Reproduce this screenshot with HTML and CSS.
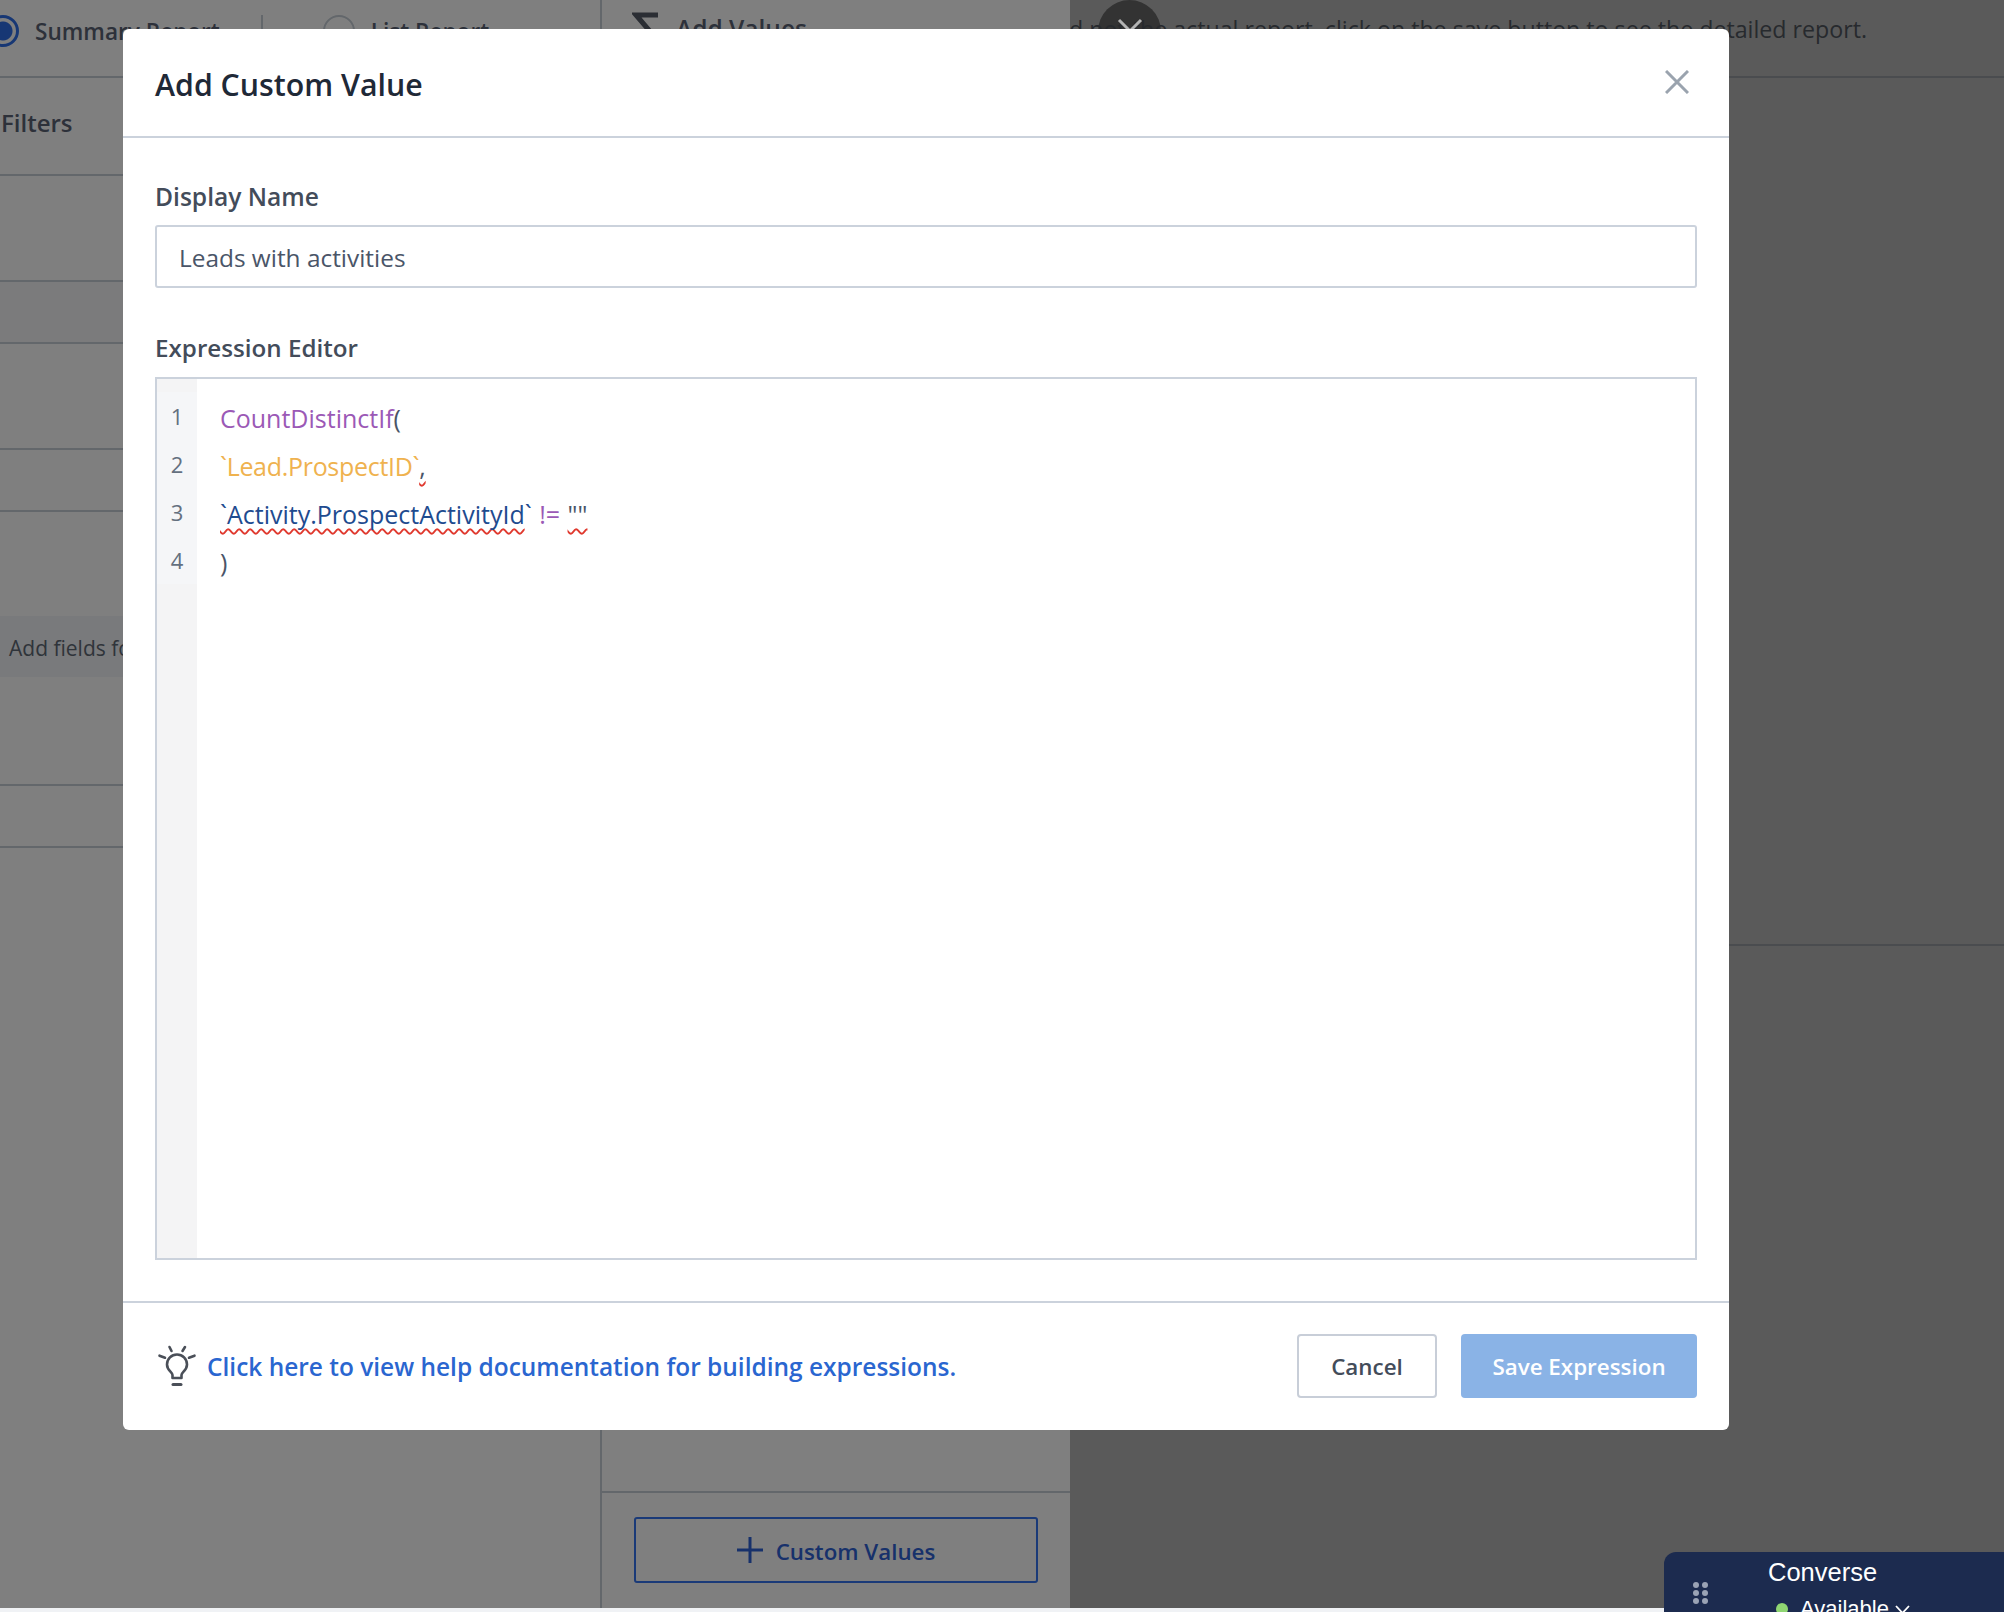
FILE: index.html
```html
<!DOCTYPE html>
<html lang="en">
<head>
<meta charset="utf-8">
<title>Add Custom Value</title>
<link rel="stylesheet" href="styles.css">
</head>
<body>
<div class="app">
  <section class="left">
    <div class="row row-head">
      <span class="radio radio-on"></span>
      <span class="type-label">Summary Report</span>
      <span class="type-sep"></span>
      <span class="radio"></span>
      <span class="type-label">List Report</span>
    </div>
    <div class="row row-filters"><span class="filters">Filters</span></div>
    <div class="row row-tall"></div>
    <div class="row row-short row-shaded"></div>
    <div class="row row-tall"></div>
    <div class="row row-short"></div>
    <div class="row row-drop"><div class="drop-band">Add fields for filtering</div></div>
    <div class="row row-short"></div>
  </section>
  <section class="mid">
    <div class="mid-head">
      <svg class="sigma" width="28" height="34" viewBox="0 0 28 34"><path d="M26 3H4L16 17L4 31H26" fill="none" stroke="#565c68" stroke-width="5"/></svg>
      <span class="mid-title">Add Values</span>
    </div>
    <div class="mid-foot">
      <div class="custom-btn">
        <svg width="26" height="26" viewBox="0 0 26 26"><path d="M13 0V26M0 13H26" fill="none" stroke="#2f62d6" stroke-width="3"/></svg>
        <span>Custom Values</span>
      </div>
    </div>
  </section>
  <section class="right">
    <div class="right-head">
      <span class="circle"></span>
      <span class="note">and not the actual report, click on the save button to see the detailed report.</span>
    </div>
    <div class="right-pane"></div>
  </section>
</div>

<div class="overlay">
  <svg class="circle-x" width="26" height="26" viewBox="0 0 26 26"><path d="M2 2L24 24M24 2L2 24" fill="none" stroke="#b4b4b4" stroke-width="3"/></svg>
  <div class="modal">
    <header class="modal-head">
      <h1 class="modal-title">Add Custom Value</h1>
      <svg class="modal-close" width="24" height="24" viewBox="0 0 24 24"><path d="M1 1L23 23M23 1L1 23" fill="none" stroke="#9aa3ae" stroke-width="3"/></svg>
    </header>
    <div class="modal-body">
      <label class="field-label">Display Name</label>
      <div class="input">Leads with activities</div>
      <label class="field-label field-label-second">Expression Editor</label>
      <div class="editor">
        <div class="gutter">
          <div class="ln">1</div>
          <div class="ln">2</div>
          <div class="ln">3</div>
          <div class="ln">4</div>
        </div>
        <div class="code">
          <div class="cl"><span class="fn">CountDistinctIf</span><span class="pn">(</span></div>
          <div class="cl"><span class="str">`Lead.ProspectID`</span><span class="pn sq">,</span></div>
          <div class="cl cl-expr"><span class="fld"><span class="sq">`Activity.ProspectActivityId</span>`</span> <span class="fn">!=</span> <span class="pn sq">""</span></div>
          <div class="cl"><span class="pn">)</span></div>
        </div>
      </div>
    </div>
    <footer class="modal-foot">
      <svg class="bulb" width="40" height="42" viewBox="0 0 40 42"><g fill="none" stroke="#4a4f58" stroke-width="2.6" stroke-linecap="round" stroke-linejoin="round"><path d="M2.5 10.7L8 12.7M12.5 2L14.5 6M28 2L25.5 6M37.5 10.7L32 12.7"/><path d="M15.5 33V30C15.5 27 10 25.5 10 19.5A10 10 0 0 1 30 19.5C30 25.5 24.5 27 24.5 30V33Z"/><path d="M16 39.5H24" stroke-width="3"/></g></svg>
      <a class="help-link">Click here to view help documentation for building expressions.</a>
      <span class="btn btn-cancel">Cancel</span>
      <span class="btn btn-save">Save Expression</span>
    </footer>
  </div>
</div>

<aside class="converse">
  <div class="grip"><i></i><i></i><i></i><i></i><i></i><i></i></div>
  <div class="conv-text">
    <div class="conv-title">Converse</div>
    <div class="conv-status">
      <span class="dot"></span>
      <span>Available</span>
      <svg width="15" height="9" viewBox="0 0 15 9"><path d="M1 1L7.5 8L14 1" fill="none" stroke="#fff" stroke-width="1.8"/></svg>
    </div>
  </div>
</aside>
</body>
</html>
```
FILE: styles.css
```css
* { box-sizing: border-box; }
html, body { margin: 0; padding: 0; }
body {
  width: 2004px;
  height: 1612px;
  overflow: hidden;
  position: relative;
  background: #f0f2f5;
  font-family: "Open Sans", "Noto Sans", sans-serif;
  color: #4a5568;
}
.app { display: flex; height: 1608px; background: #fff; }

/* left column */
.left { width: 600px; flex: none; overflow: hidden; }
.row { border-bottom: 2px solid #c6ced6; }
.row-head { height: 78px; display: flex; align-items: center; padding-bottom: 14px; }
.radio {
  width: 32px; height: 32px; flex: none;
  border: 2px solid #c6ced6; border-radius: 50%;
  margin-left: 0;
}
.radio-on {
  margin-left: -13px;
  border: 3px solid #2f6fe8;
  background: radial-gradient(circle, #2f6fe8 0 9px, transparent 10px);
}
.type-label { font-size: 22.6px; font-weight: 600; color: #5a6375; white-space: nowrap; margin-left: 16px; }
.type-sep { width: 2px; height: 32px; background: #c6ced6; margin: 0 60px 0 41px; }
.row-filters { height: 98px; display: flex; align-items: center; padding: 0 0 7px 1px; }
.filters { font-size: 24px; font-weight: 600; color: #5a6375; }
.row-tall { height: 106px; }
.row-short { height: 62px; }
.row-shaded { background: #f6f7f9; }
.row-drop { height: 274px; padding-top: 104px; }
.drop-band {
  height: 61px; line-height: 65px; padding-left: 9px;
  background: #f3f5f8; font-size: 21px; color: #5f6875; white-space: nowrap;
}

/* middle column */
.mid {
  width: 470px; flex: none;
  display: flex; flex-direction: column;
  border-left: 2px solid #c6ced6;
}
.mid-head { height: 58px; display: flex; align-items: flex-start; padding: 12px 0 0 30px; }
.sigma { flex: none; }
.mid-title { font-size: 24.5px; font-weight: 600; color: #5a6375; margin-left: 16px; line-height: 34px; }
.mid-foot { margin-top: auto; border-top: 2px solid #c6ced6; padding: 24px 32px 25px; }
.custom-btn {
  height: 66px; width: 404px;
  display: flex; align-items: center; justify-content: center; gap: 13px;
  border: 2px solid #3474f0; border-radius: 3px;
  color: #2f62d6; font-size: 22.3px; font-weight: 600;
}
.custom-btn span { padding-top: 2px; }

/* right column */
.right { flex: 1; min-width: 0; background: #b4b4b4; overflow: hidden; position: relative; }
.right-head {
  height: 78px;
  display: flex; justify-content: flex-end;
  padding: 11px 137px 0 0;
  border-bottom: 2px solid #94999e;
  white-space: nowrap;
}
.note { font-size: 23.2px; line-height: 36px; color: #4f545c; position: relative; }
.circle {
  position: absolute; left: 28px; top: 0;
  width: 63px; height: 63px; border-radius: 50%;
  background: #666;
}
.right-pane { height: 868px; border-bottom: 2px solid #94999e; }

/* overlay and modal */
.overlay {
  position: absolute; left: 0; top: 0; right: 0; height: 1608px;
  background: rgba(0, 0, 0, .5);
}
.circle-x { position: absolute; left: 1117px; top: 18px; }
.modal {
  position: absolute; left: 123px; top: 29px;
  width: 1606px; height: 1401px;
  background: #fff; border-radius: 6px;
  display: flex; flex-direction: column;
}
.modal-head {
  height: 109px; flex: none;
  display: flex; align-items: center; justify-content: space-between;
  padding: 0 40px 0 32px;
  border-bottom: 2px solid #cbd2dc;
}
.modal-title { margin: 5px 0 0; font-size: 30.3px; font-weight: 600; color: #1f2937; line-height: 40px; }
.modal-close { margin-top: -2px; }
.modal-body { flex: 1; padding: 41px 32px 41px; display: flex; flex-direction: column; }
.field-label { display: block; font-size: 24.6px; font-weight: 600; line-height: 36px; color: #434c5a; margin-bottom: 10px; }
.field-label-second { font-size: 24.2px; margin-top: 42px; margin-bottom: 11px; }
.input {
  height: 63px; line-height: 62px; padding-left: 22px; flex: none;
  border: 2px solid #cbd2dc; border-radius: 3px;
  font-size: 24.4px; color: #4a5568;
}
.editor {
  flex: 1; display: flex;
  border: 2px solid #cbd2dc;
}
.gutter { width: 40px; flex: none; background: #f4f4f5; padding-top: 13px; }
.ln { height: 48px; line-height: 48px; text-align: center; font-size: 22px; color: #64707f; background: #f5f6f8; }
.code { flex: 1; padding: 15px 0 0 23px; font-size: 25px; }
.cl { height: 48px; line-height: 48px; white-space: pre; }
.cl-expr { word-spacing: 1px; }
.fn { color: #9b59b6; }
.str { color: #efb24f; letter-spacing: -.3px; }
.fld { color: #1e4b8f; }
.pn { color: #4a5568; }
.sq {
  text-decoration: underline wavy #e0392e 1.5px;
  text-decoration-skip-ink: none;
  text-underline-offset: 4px;
}
.modal-foot {
  height: 129px; flex: none;
  display: flex; align-items: center;
  padding: 0 32px 1px 34px;
  border-top: 2px solid #cbd2dc;
}
.bulb { flex: none; margin-right: 10px; }
.help-link { font-size: 24.46px; font-weight: 600; color: #2a66d0; margin-right: auto; }
.btn {
  height: 64px; line-height: 62px; text-align: center;
  font-size: 22.4px; font-weight: 600; border-radius: 4px; border: 2px solid transparent;
}
.btn-cancel { width: 140px; border-color: #c8ced8; color: #434c5a; background: #fff; margin-right: 24px; }
.btn-save { width: 236px; background: #8ab3e6; color: #fff; }

/* widget */
.converse {
  position: absolute; left: 1664px; top: 1552px; right: 0; bottom: 0;
  background: #1c2b4f; border-top-left-radius: 12px;
  display: flex; overflow: hidden;
  font-family: "Liberation Sans", Arial, sans-serif; color: #fff;
}
.grip {
  display: grid; grid-template-columns: 6px 6px; grid-auto-rows: 6px;
  column-gap: 3px; row-gap: 2px;
  margin: 30px 0 0 29px; align-self: flex-start;
}
.grip i { background: #9aa3b5; border-radius: 50%; }
.conv-text { margin: 4px 0 0 60px; }
.conv-title { font-size: 25.5px; line-height: 32px; }
.conv-status { display: flex; align-items: center; margin-top: 8px; padding-left: 8px; font-size: 22px; line-height: 26px; }
.dot { width: 12px; height: 12px; border-radius: 50%; background: #8fd672; margin-right: 12px; }
.conv-status svg { margin-left: 6px; }
```
